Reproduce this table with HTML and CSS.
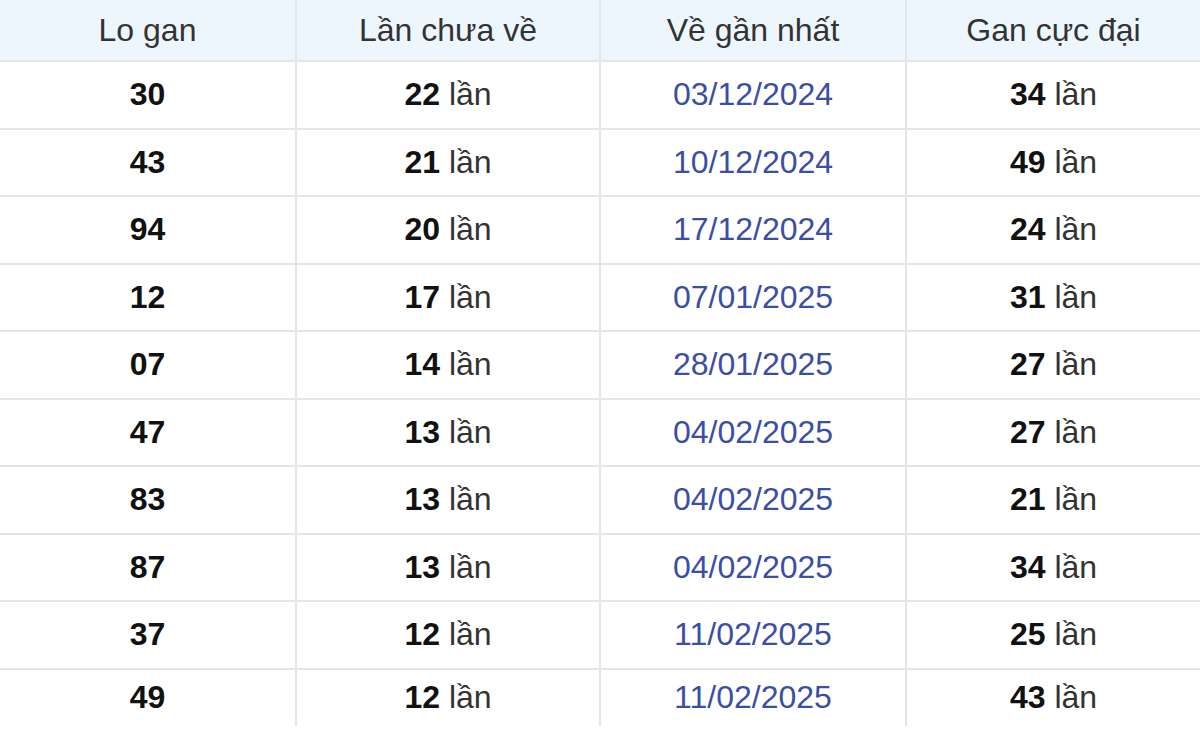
FILE: index.html
```html
<!DOCTYPE html>
<html lang="vi">
<head>
<meta charset="utf-8">
<link rel="stylesheet" href="styles.css">
</head>
<body>
<div class="table">
  <div class="row head">
    <div class="cell">Lo gan</div>
    <div class="cell">Lần chưa về</div>
    <div class="cell">Về gần nhất</div>
    <div class="cell">Gan cực đại</div>
  </div>
  <div class="row"><div class="cell"><b>30</b></div><div class="cell"><span><b>22</b> lần</span></div><div class="cell date">03/12/2024</div><div class="cell"><span><b>34</b> lần</span></div></div>
  <div class="row"><div class="cell"><b>43</b></div><div class="cell"><span><b>21</b> lần</span></div><div class="cell date">10/12/2024</div><div class="cell"><span><b>49</b> lần</span></div></div>
  <div class="row"><div class="cell"><b>94</b></div><div class="cell"><span><b>20</b> lần</span></div><div class="cell date">17/12/2024</div><div class="cell"><span><b>24</b> lần</span></div></div>
  <div class="row"><div class="cell"><b>12</b></div><div class="cell"><span><b>17</b> lần</span></div><div class="cell date">07/01/2025</div><div class="cell"><span><b>31</b> lần</span></div></div>
  <div class="row"><div class="cell"><b>07</b></div><div class="cell"><span><b>14</b> lần</span></div><div class="cell date">28/01/2025</div><div class="cell"><span><b>27</b> lần</span></div></div>
  <div class="row"><div class="cell"><b>47</b></div><div class="cell"><span><b>13</b> lần</span></div><div class="cell date">04/02/2025</div><div class="cell"><span><b>27</b> lần</span></div></div>
  <div class="row"><div class="cell"><b>83</b></div><div class="cell"><span><b>13</b> lần</span></div><div class="cell date">04/02/2025</div><div class="cell"><span><b>21</b> lần</span></div></div>
  <div class="row"><div class="cell"><b>87</b></div><div class="cell"><span><b>13</b> lần</span></div><div class="cell date">04/02/2025</div><div class="cell"><span><b>34</b> lần</span></div></div>
  <div class="row"><div class="cell"><b>37</b></div><div class="cell"><span><b>12</b> lần</span></div><div class="cell date">11/02/2025</div><div class="cell"><span><b>25</b> lần</span></div></div>
  <div class="row last"><div class="cell"><b>49</b></div><div class="cell"><span><b>12</b> lần</span></div><div class="cell date">11/02/2025</div><div class="cell"><span><b>43</b> lần</span></div></div>
</div>
</body>
</html>
```
FILE: styles.css
```css
html, body {
  margin: 0;
  padding: 0;
  background: #ffffff;
  overflow: hidden;
}
body {
  width: 1200px;
  height: 736px;
  font-family: "Liberation Sans", Arial, sans-serif;
  font-size: 32px;
  color: #333333;
}
.table {
  display: flex;
  flex-direction: column;
}
.row {
  display: grid;
  grid-template-columns: 297px 304px 306px 293px;
  height: 65.5px;
  border-bottom: 2px solid #e2e5ea;
}
.row.head {
  height: 60px;
  background: #eef6fd;
}
.row.last {
  height: 56px;
  border-bottom: none;
}
.cell {
  display: flex;
  align-items: center;
  justify-content: center;
  border-right: 2px solid #e2e5ea;
  white-space: nowrap;
}
.cell:last-child {
  border-right: none;
}
.head .cell {
  color: #333333;
}
.cell b {
  font-weight: bold;
  color: #111111;
}
.date {
  color: #3a4ea6;
}
```
